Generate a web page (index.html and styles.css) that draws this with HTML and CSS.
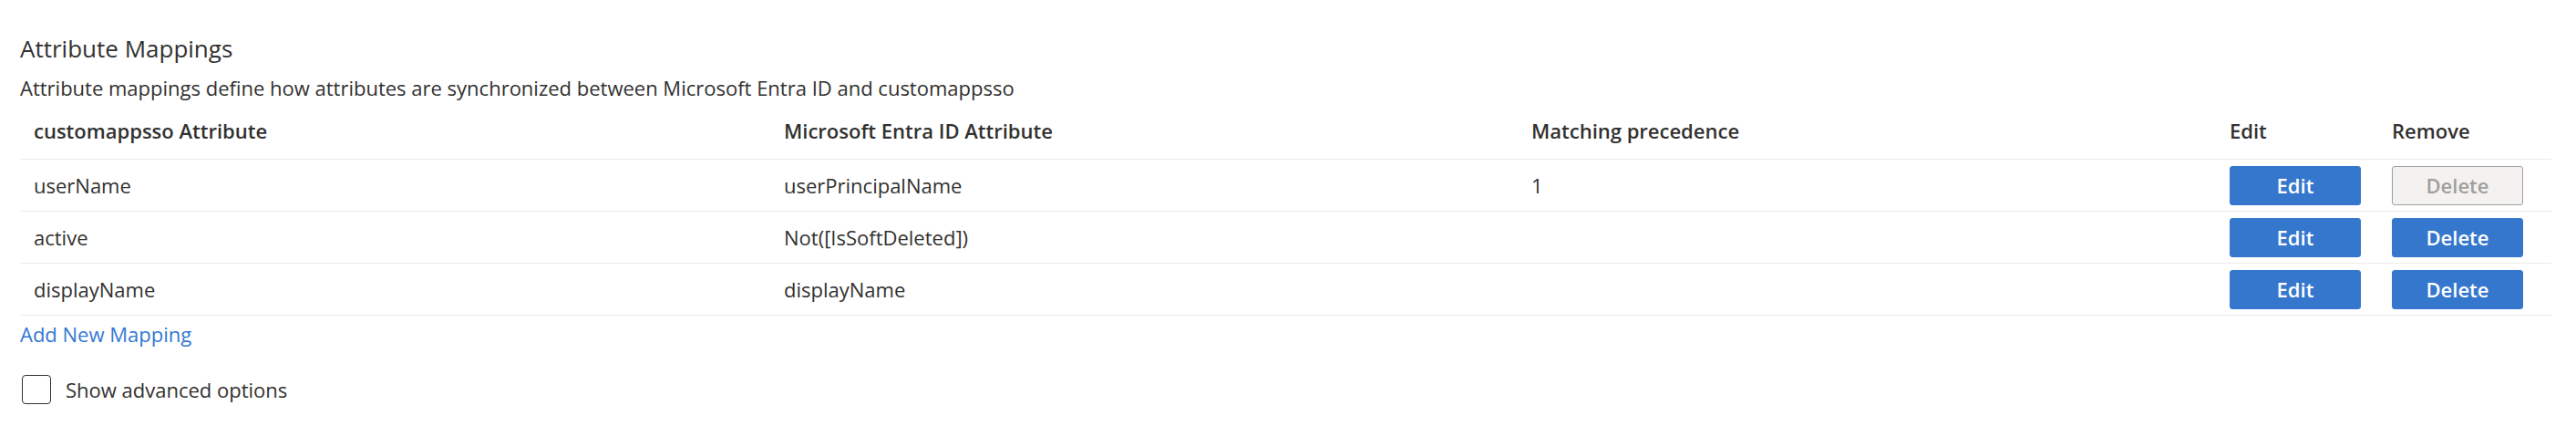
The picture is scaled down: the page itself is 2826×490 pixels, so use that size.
FILE: index.html
```html
<!DOCTYPE html>
<html lang="en">
<head>
    <meta charset="UTF-8">
    <meta name="viewport" content="width=device-width, initial-scale=1.0">
    <title>Attribute Mappings</title>
    <link rel="stylesheet" href="styles.css">
</head>
<body>

    <section class="mappings">
        <h2 class="titulo">Attribute Mappings</h2>
        <p class="descripcion">Attribute mappings define how attributes are synchronized between Microsoft Entra ID and customappsso</p>

        <table class="tabla">
            <colgroup>
                <col class="col-origen">
                <col class="col-destino">
                <col class="col-precedencia">
                <col class="col-editar">
                <col class="col-quitar">
            </colgroup>
            <thead>
                <tr>
                    <th>customappsso Attribute</th>
                    <th>Microsoft Entra ID Attribute</th>
                    <th>Matching precedence</th>
                    <th class="accion">Edit</th>
                    <th class="accion">Remove</th>
                </tr>
            </thead>
            <tbody>
                <tr>
                    <td>userName</td>
                    <td>userPrincipalName</td>
                    <td>1</td>
                    <td class="accion"><button class="boton">Edit</button></td>
                    <td class="accion"><button class="boton" disabled>Delete</button></td>
                </tr>
                <tr>
                    <td>active</td>
                    <td>Not([IsSoftDeleted])</td>
                    <td></td>
                    <td class="accion"><button class="boton">Edit</button></td>
                    <td class="accion"><button class="boton">Delete</button></td>
                </tr>
                <tr>
                    <td>displayName</td>
                    <td>displayName</td>
                    <td></td>
                    <td class="accion"><button class="boton">Edit</button></td>
                    <td class="accion"><button class="boton">Delete</button></td>
                </tr>
            </tbody>
        </table>

        <a href="#" class="agregar">Add New Mapping</a>

        <label class="opcion">
            <span class="casilla"></span>
            Show advanced options
        </label>
    </section>

</body>
</html>
```

FILE: styles.css
```css
body {
    font-family: 'Open Sans', sans-serif;
    margin: 0;
    padding: 0;
    color: #323130;
    background: #fff;
}

.mappings {
    padding: 36px 0 0 22px;
    width: 2777px;
}

.titulo {
    font-size: 26px;
    font-weight: 400;
    line-height: 34px;
    margin: 0;
}

.descripcion {
    font-size: 22px;
    line-height: 30px;
    margin: 11px 0 0 0;
}

.tabla {
    border-collapse: collapse;
    table-layout: fixed;
    width: 2777px;
    font-size: 22px;
    margin-top: 7px;
    color: #323130;
}

.col-origen { width: 823px; }
.col-destino { width: 820px; }
.col-precedencia { width: 766px; }
.col-editar { width: 178px; }
.col-quitar { width: 190px; }

.tabla th,
.tabla td {
    text-align: left;
    padding: 0 0 0 15px;
    height: 56px;
    border-bottom: 1px solid #edebe9;
}

.tabla th {
    font-weight: 600;
    padding-bottom: 6px;
    height: 50px;
}

.boton {
    font-family: 'Open Sans', sans-serif;
    font-size: 22px;
    font-weight: 600;
    width: 144px;
    height: 43px;
    border: 1px solid #3477cd;
    border-radius: 3px;
    background: #3477cd;
    color: #fff;
    padding: 0;
    display: block;
}

.boton:disabled {
    background: #f3f2f1;
    border-color: #a19f9d;
    color: #a19f9d;
}

.agregar {
    display: block;
    font-size: 22px;
    line-height: 30px;
    margin-top: 5px;
    color: #3478d1;
    text-decoration: none;
    width: max-content;
}

.opcion {
    display: flex;
    align-items: center;
    gap: 16px;
    font-size: 22px;
    margin-top: 30px;
    padding-left: 2px;
}

.casilla {
    width: 30px;
    height: 30px;
    border: 1px solid #323130;
    border-radius: 4px;
}
```
